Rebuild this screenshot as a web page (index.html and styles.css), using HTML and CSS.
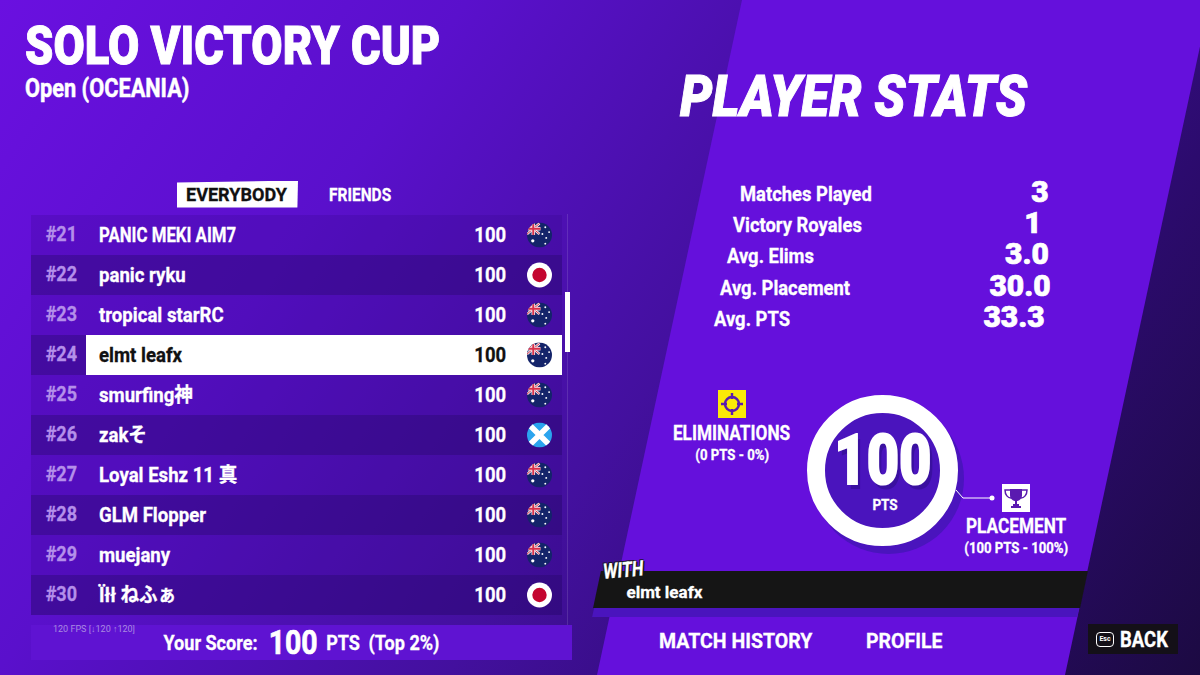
FILE: index.html
```html
<!DOCTYPE html>
<html lang="en">
<head>
    <meta charset="UTF-8">
    <title>Solo Victory Cup</title>
    <link rel="stylesheet" href="styles.css">
</head>
<body>
    <svg class="defs" width="0" height="0">
        <defs>
            <clipPath id="disc"><circle cx="13" cy="13" r="13"/></clipPath>
            <symbol id="flag-au" viewBox="0 0 26 26">
                <g clip-path="url(#disc)">
                    <rect width="26" height="26" fill="#14246a"/>
                    <rect width="13" height="13" fill="#26306f"/>
                    <path d="M0 1 13 12M0 12 13 1" stroke="#f3e9ee" stroke-width="2.6"/>
                    <path d="M0 1 13 12M0 12 13 1" stroke="#d8304a" stroke-width="1"/>
                    <path d="M6.500 0V13M0 6.500H14" stroke="#f3e9ee" stroke-width="3.600"/>
                    <path d="M6.500 0V13M0 6.500H14" stroke="#d8304a" stroke-width="2"/>
                    <circle cx="6" cy="19" r="1.700" fill="#fff"/>
                    <circle cx="19" cy="5" r="1" fill="#fff"/>
                    <circle cx="23" cy="10" r="1" fill="#fff"/>
                    <circle cx="16" cy="12" r="1" fill="#fff"/>
                    <circle cx="20" cy="16" r="1" fill="#fff"/>
                    <circle cx="19" cy="22" r="1" fill="#fff"/>
                </g>
            </symbol>
            <symbol id="flag-jp" viewBox="0 0 26 26">
                <circle cx="13" cy="13" r="13" fill="#fff"/>
                <circle cx="13" cy="13" r="7.500" fill="#c4062f"/>
            </symbol>
            <symbol id="flag-sc" viewBox="0 0 26 26">
                <g clip-path="url(#disc)">
                    <rect width="26" height="26" fill="#2ba4ee"/>
                    <path d="M2 2 24 24M24 2 2 24" stroke="#fff" stroke-width="6"/>
                </g>
            </symbol>
        </defs>
    </svg>

    <div class="screen">
        <div class="slant"></div>

        <section class="left">
            <h1 class="cup-title">SOLO VICTORY CUP</h1>
            <div class="cup-region">Open (OCEANIA)</div>

            <div class="tabs">
                <div class="tab active"><span>EVERYBODY</span></div>
                <div class="tab"><span>FRIENDS</span></div>
            </div>

            <div class="board">
                <div class="row"><span class="rank">#21</span><div class="cell"><span class="name name-caps">PANIC MEKI AIM7</span><span class="score">100</span><svg class="flag"><use href="#flag-au"/></svg></div></div>
                <div class="row"><span class="rank">#22</span><div class="cell"><span class="name">panic ryku</span><span class="score">100</span><svg class="flag"><use href="#flag-jp"/></svg></div></div>
                <div class="row"><span class="rank">#23</span><div class="cell"><span class="name">tropical starRC</span><span class="score">100</span><svg class="flag"><use href="#flag-au"/></svg></div></div>
                <div class="row me"><span class="rank">#24</span><div class="cell"><span class="name">elmt leafx</span><span class="score">100</span><svg class="flag"><use href="#flag-au"/></svg></div></div>
                <div class="row"><span class="rank">#25</span><div class="cell"><span class="name">smurfing神</span><span class="score">100</span><svg class="flag"><use href="#flag-au"/></svg></div></div>
                <div class="row"><span class="rank">#26</span><div class="cell"><span class="name">zakそ</span><span class="score">100</span><svg class="flag"><use href="#flag-sc"/></svg></div></div>
                <div class="row"><span class="rank">#27</span><div class="cell"><span class="name">Loyal Eshz 11 真</span><span class="score">100</span><svg class="flag"><use href="#flag-au"/></svg></div></div>
                <div class="row"><span class="rank">#28</span><div class="cell"><span class="name">GLM Flopper</span><span class="score">100</span><svg class="flag"><use href="#flag-au"/></svg></div></div>
                <div class="row"><span class="rank">#29</span><div class="cell"><span class="name">muejany</span><span class="score">100</span><svg class="flag"><use href="#flag-au"/></svg></div></div>
                <div class="row"><span class="rank">#30</span><div class="cell"><span class="name">Ïłł ねふぁ</span><span class="score">100</span><svg class="flag"><use href="#flag-jp"/></svg></div></div>
                <div class="scrollbar"></div>
            </div>

            <div class="your-score">
                <span class="fps">120 FPS [↓120 ↑120]</span>
                <div class="your-line">
                    <span>Your Score:</span>
                    <span class="your-points">100</span>
                    <span>PTS</span>
                    <span class="your-top">(Top 2%)</span>
                </div>
            </div>
        </section>

        <section class="right">
            <h2 class="stats-title">PLAYER STATS</h2>

            <div class="stats">
                <div class="stat"><span class="stat-label">Matches Played</span><span class="stat-value">3</span></div>
                <div class="stat"><span class="stat-label">Victory Royales</span><span class="stat-value">1</span></div>
                <div class="stat"><span class="stat-label">Avg. Elims</span><span class="stat-value">3.0</span></div>
                <div class="stat"><span class="stat-label">Avg. Placement</span><span class="stat-value">30.0</span></div>
                <div class="stat"><span class="stat-label">Avg. PTS</span><span class="stat-value">33.3</span></div>
            </div>

            <div class="breakdown">
                <div class="part part-elims">
                    <svg class="part-icon" viewBox="0 0 28 28">
                        <rect width="28" height="28" fill="#fbe907"/>
                        <circle cx="14" cy="14" r="7" fill="none" stroke="#5a1ab0" stroke-width="2.400"/>
                        <path d="M14 3V9M14 19V25M3 14H9M19 14H25" stroke="#5a1ab0" stroke-width="2.400"/>
                    </svg>
                    <div class="part-name">ELIMINATIONS</div>
                    <div class="part-pts">(0 PTS - 0%)</div>
                </div>

                <div class="ring">
                    <div class="ring-num">100</div>
                    <div class="ring-pts">PTS</div>
                </div>

                <div class="part part-place">
                    <svg class="connector" width="40" height="12" viewBox="0 0 40 12">
                        <path d="M0 1 7 9H36" fill="none" stroke="#fff" stroke-width="1"/>
                        <circle cx="36" cy="9" r="2.500" fill="#fff"/>
                    </svg>
                    <svg class="part-icon" viewBox="0 0 28 28">
                        <rect width="28" height="28" fill="#fff"/>
                        <path d="M8 5H20V11C20 15 17 17 14 17S8 15 8 11Z" fill="#5a1ab0"/>
                        <path d="M8 6H3C3 11 6 14 9 14M20 6H25C25 11 22 14 19 14" fill="none" stroke="#5a1ab0" stroke-width="1.500"/>
                        <path d="M13 17H15V20H13ZM9 22H19V24H9ZM11 20H17V22H11Z" fill="#5a1ab0"/>
                    </svg>
                    <div class="part-name">PLACEMENT</div>
                    <div class="part-pts">(100 PTS - 100%)</div>
                </div>
            </div>

            <div class="with-bar">
                <span class="with-tag">WITH</span>
                <span class="with-name">elmt leafx</span>
            </div>

            <div class="footer">
                <span class="foot-link">MATCH HISTORY</span>
                <span class="foot-link foot-profile">PROFILE</span>
                <div class="back"><span class="esc">Esc</span><span class="back-label">BACK</span></div>
            </div>
        </section>
    </div>
</body>
</html>
```

FILE: styles.css
```css
* {margin: 0; padding: 0; box-sizing: border-box;}
html, body {width: 1200px; height: 675px; overflow: hidden;}
body {
    font-family: Roboto, "Liberation Sans", "Noto Sans CJK JP", sans-serif;
    font-weight: 700;
    color: white;
    background: #200a50;
    white-space: nowrap;
    -webkit-text-stroke: 0.3px currentColor;
}
.defs {position: absolute;}
.screen {
    position: relative;
    width: 1200px;
    height: 675px;
    display: flex;
    overflow: hidden;
    background: linear-gradient(125deg, #6a10e0 0%, #5a10cc 28%, #43109e 55%, #2c0b6e 78%, #1c0a42 100%);
}
.slant {
    position: absolute;
    inset: 0;
    background: #6510dc;
    clip-path: polygon(742px 0, 1210px 0, 1065px 675px, 597px 675px);
}

/* left column */
.left {
    position: relative;
    width: 600px;
    padding: 21px 0 0 25px;
    flex: none;
}
.cup-title {
    font-size: 54px;
    line-height: 50px;
    font-weight: 900;
    -webkit-text-stroke: 1px white;
    transform: scaleX(0.84);
    transform-origin: left center;
}
.cup-region {
    font-size: 25px;
    line-height: 30px;
    margin-top: 3px;
    -webkit-text-stroke: 0.5px white;
    transform: scaleX(0.87);
    transform-origin: left center;
}
.tabs {
    display: flex;
    align-items: center;
    margin: 76px 0 0 152px;
    height: 28px;
    gap: 31px;
    font-size: 18px;
}
.tab span {display: inline-block; transform: scaleX(0.86); transform-origin: left center;}
.tab.active {
    background: white;
    color: #111;
    width: 121px;
    height: 27px;
    line-height: 28px;
    padding-left: 9px;
    font-size: 19px;
    clip-path: polygon(0 2px, 100% 0, 99.500% 100%, 0 100%);
}
.tab.active span {transform: scaleX(0.95);}
.board {
    position: relative;
    margin: 6px 0 0 6px;
    width: 539px;
    height: 411px;
    padding-top: 1px;
    overflow: hidden;
}
.board::after {
    content: "";
    position: absolute;
    left: 536px;
    top: 0;
    bottom: 0;
    width: 1px;
    background: rgba(255,255,255,0.12);
}
.row {
    display: flex;
    width: 531px;
    height: 40px;
    background: rgba(50,5,130,0.22);
}
.row:nth-child(even) {background: rgba(40,5,110,0.5);}
.rank {
    width: 46px;
    margin-right: 9px;
    text-align: right;
    font-size: 20px;
    line-height: 39px;
    color: #b48fea;
    transform: scaleX(0.9);
    transform-origin: right center;
}
.cell {
    flex: 1;
    display: flex;
    align-items: center;
    padding: 0 10px 0 13px;
}
.name {
    flex: 1;
    font-size: 20px;
    line-height: 24px;
    transform: scaleX(0.93);
    transform-origin: left center;
}
.name-caps {transform: scaleX(0.84);}
.score {font-size: 21px; margin-right: 21px; transform: scaleX(0.88); transform-origin: right center;}
.flag {width: 25px; height: 26px; display: block;}
.me {background: rgba(40,5,110,0.6);}
.me .cell {background: white; color: #111;}
.scrollbar {
    position: absolute;
    top: 78px;
    left: 534px;
    width: 5px;
    height: 60px;
    background: white;
    z-index: 1;
}
.your-score {
    position: relative;
    margin: 0 0 0 6px;
    width: 541px;
    height: 35px;
    background: #5f13d2;
    display: flex;
    align-items: center;
    justify-content: center;
}
.your-line {
    display: flex;
    align-items: center;
    gap: 8px;
    font-size: 21px;
    transform: scaleX(0.86);
}
.your-points {font-size: 33px; margin: 0 2px 0 5px; -webkit-text-stroke: 0.7px white;}
.your-top {margin-left: 2px;}
.fps {
    position: absolute;
    left: 22px;
    top: -1px;
    font-size: 9px;
    font-weight: 400;
    -webkit-text-stroke: 0;
    color: #a98ae0;
}

/* right column */
.right {
    position: relative;
    flex: 1;
    padding-top: 70px;
}
.stats-title {
    font-size: 58px;
    line-height: 52px;
    margin-left: 80px;
    font-style: italic;
    font-weight: 900;
    -webkit-text-stroke: 1px white;
    transform: scaleX(0.885);
    transform-origin: left center;
}
.stats {margin-top: 56px;}
.stat {display: flex; align-items: center; height: 31.300px;}
.stat:nth-child(1) {margin-left: 140px;}
.stat:nth-child(2) {margin-left: 133px;}
.stat:nth-child(3) {margin-left: 127px;}
.stat:nth-child(4) {margin-left: 120px;}
.stat:nth-child(5) {margin-left: 114px;}
.stat-label {width: 260px; font-size: 20px; transform: scaleX(0.92); transform-origin: left center;}
.stat-value {
    width: 80px;
    margin-bottom: 4px;
    text-align: center;
    font-size: 30px;
    line-height: 24px;
    font-weight: 900;
    -webkit-text-stroke: 0.7px white;
}

.breakdown {
    display: flex;
    margin: 65px 0 0 75px;
    height: 170px;
}
.part {display: flex; flex-direction: column; align-items: center;}
.part-icon {width: 28px; height: 28px; flex: none;}
.part-name {font-size: 21px; line-height: 24px; margin-top: 3px; transform: scaleX(0.82);}
.part-pts {font-size: 14px; line-height: 20px; transform: scaleX(0.94);}
.part-elims {width: 114px; margin-top: -9px;}
.ring {
    width: 151px;
    height: 151px;
    margin: -4px 0 0 18px;
    border-radius: 50%;
    border: 18px solid white;
    background: #4a14bd;
    box-shadow: 6px 8px 0 #4a14bd;
    display: flex;
    flex-direction: column;
    align-items: center;
    flex: none;
}
.ring-num {
    font-size: 70px;
    line-height: 58px;
    font-weight: 900;
    margin-top: 18px;
    -webkit-text-stroke: 2px white;
    text-shadow: 4px 5px 0 #3a10a0;
    transform: scaleX(0.8);
}
.ring-pts {font-size: 15px; margin: 7px 0 0 5px; transform: scaleX(0.9);}
.part-place {position: relative; width: 108px; margin: 85px 0 0 4px;}
.part-place .part-name {margin-top: 2px;}
.connector {position: absolute; left: -6px; top: 5px;}

.with-bar {
    position: relative;
    margin: 2px 0 0 -3px;
    width: 487px;
    height: 37px;
    background: #151515;
    transform: skewX(-12deg);
    box-shadow: 0 10px 0 -1px #4a14bd;
}
.with-tag {
    position: absolute;
    left: 0;
    top: -11px;
    padding: 0 3px;
    font-size: 21px;
    font-style: italic;
    text-shadow: -1px -1px 0 #151515, 1px -1px 0 #151515, -1px 1px 0 #151515, 2px 1px 0 #151515;
    transform: skewX(12deg) rotate(-5deg) scaleX(0.8);
    transform-origin: left center;
}
.with-name {
    position: absolute;
    left: 30px;
    top: 11px;
    font-size: 17px;
    transform: skewX(12deg);
}
.footer {
    display: flex;
    align-items: center;
    margin: 16px 0 0 59px;
    height: 30px;
    font-size: 21px;
}
.foot-link {
    width: 207px;
    margin-top: 4px;
    transform: scaleX(0.93);
    transform-origin: left center;
}
.foot-profile {width: 222px;}
.back {
    display: flex;
    align-items: center;
    gap: 6px;
    height: 30px;
    width: 90px;
    padding-left: 8px;
    background: #141018;
    font-size: 22px;
}
.back-label {transform: scaleX(0.84); transform-origin: left center;}
.esc {
    width: 18px;
    height: 15px;
    border: 1.500px solid white;
    border-radius: 4px;
    font-size: 7px;
    line-height: 12px;
    text-align: center;
    -webkit-text-stroke: 0;
}
```
